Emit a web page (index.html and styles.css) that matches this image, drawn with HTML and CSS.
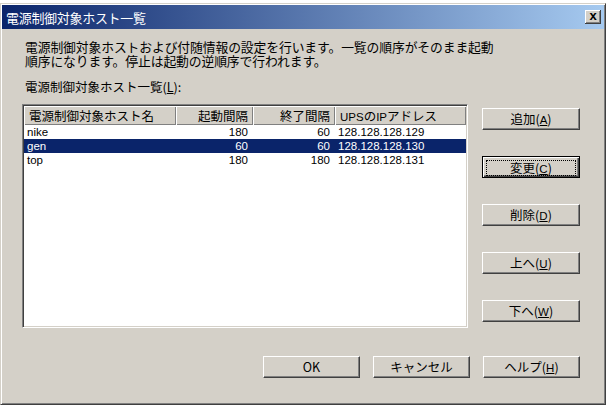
FILE: index.html
```html
<!DOCTYPE html>
<html lang="ja">
<head>
  <meta charset="UTF-8" />
  <title>電源制御対象ホスト一覧</title>
  <link rel="stylesheet" href="styles.css">
</head>
<body>
  <div class="window">
    <div class="titlebar">
      <span class="title">電源制御対象ホスト一覧</span>
      <span class="close">x</span>
    </div>

    <div class="content">
      <p class="desc">
        電源制御対象ホストおよび付随情報の設定を行います。一覧の順序がそのまま起動<br>
        順序になります。停止は起動の逆順序で行われます。
      </p>
      <p class="label">電源制御対象ホスト一覧(<u>L</u>):</p>

      <div class="main">
        <div class="listview">
          <table>
            <colgroup>
              <col class="c-name"><col class="c-start"><col class="c-stop"><col>
            </colgroup>
            <thead>
              <tr>
                <th>電源制御対象ホスト名</th>
                <th class="num">起動間隔</th>
                <th class="num">終了間隔</th>
                <th><span class="lat">UPS</span>の<span class="lat">IP</span>アドレス</th>
              </tr>
            </thead>
            <tbody>
              <tr>
                <td>nike</td><td class="num">180</td><td class="num">60</td><td>128.128.128.129</td>
              </tr>
              <tr class="selected">
                <td>gen</td><td class="num">60</td><td class="num">60</td><td>128.128.128.130</td>
              </tr>
              <tr>
                <td>top</td><td class="num">180</td><td class="num">180</td><td>128.128.128.131</td>
              </tr>
            </tbody>
          </table>
        </div>

        <div class="side">
          <button>追加(<u>A</u>)</button>
          <button class="default"><span class="focus">変更(<u>C</u>)</span></button>
          <button>削除(<u>D</u>)</button>
          <button>上へ(<u>U</u>)</button>
          <button>下へ(<u>W</u>)</button>
        </div>
      </div>

      <div class="footer">
        <button>OK</button>
        <button>キャンセル</button>
        <button>ヘルプ(<u>H</u>)</button>
      </div>
    </div>
  </div>
</body>
</html>
```

FILE: styles.css
```css
body {
  margin: 0;
  background: #ffffff;
  font-family: "Noto Sans CJK JP", sans-serif;
  font-size: 12.5px;
  color: #000;
}
.window {
  width: 606px;
  margin-top: 3px;
  background: #d4d0c8;
  border: 1px solid #d4d0c8;
  border-right-color: #404040;
  border-bottom-color: #404040;
  box-shadow: inset 1px 1px 0 #ffffff, inset -1px -1px 0 #808080;
  padding: 1px 1px 0 1px;
  box-sizing: border-box;
  height: 402px;
}
.titlebar {
  height: 24px;
  display: flex;
  align-items: center;
  justify-content: space-between;
  padding: 0 3px 0 4px;
  background: linear-gradient(to right, #0a246a, #a6caf0);
}
.title {
  color: #ffffff;
  font-size: 13px;
  letter-spacing: -0.3px;
}
.close {
  width: 16px;
  height: 14px;
  background: #d4d0c8;
  box-shadow: inset -1px -1px 0 #404040, inset 1px 1px 0 #ffffff, inset -2px -2px 0 #808080;
  font-family: "Liberation Sans", sans-serif;
  font-size: 13px;
  font-weight: bold;
  line-height: 12px;
  text-align: center;
}
.content {
  padding: 11px 24px 0 20px;
}
.desc {
  margin: 0 0 12px 3px;
  line-height: 14px;
  font-size: 12.8px;
  letter-spacing: -0.1px;
}
.label {
  margin: 0 0 10px 3px;
  line-height: 14px;
}
.main {
  display: flex;
  gap: 14px;
}
.listview {
  width: 447px;
  height: 224px;
  box-sizing: border-box;
  background: #ffffff;
  border: 1px solid #808080;
  border-right-color: #ffffff;
  border-bottom-color: #ffffff;
  box-shadow: inset 1px 1px 0 #404040, inset -1px -1px 0 #d4d0c8;
  padding: 1px;
}
table {
  width: 100%;
  border-collapse: collapse;
  table-layout: fixed;
}
.c-name { width: 152px; }
.c-start { width: 77px; }
.c-stop { width: 82px; }
th {
  height: 18px;
  padding: 0 5px;
  background: #d4d0c8;
  font-weight: normal;
  text-align: left;
  box-shadow: inset 1px 1px 0 #ffffff, inset -1px -1px 0 #808080;
  white-space: nowrap;
  overflow: hidden;
}
.lat {
  font-family: "Liberation Sans", sans-serif;
  font-size: 11.5px;
}
td {
  height: 14px;
  padding: 0 5px 0 3px;
  font-family: "Liberation Sans", sans-serif;
  font-size: 11.5px;
  line-height: 14px;
  white-space: nowrap;
}
.num {
  text-align: right;
}
tr.selected td {
  background: #0a246a;
  color: #ffffff;
}
.side {
  display: flex;
  flex-direction: column;
  gap: 26px;
  padding-top: 4px;
}
button {
  width: 98px;
  height: 22px;
  background: #d4d0c8;
  border: 1px solid #ffffff;
  border-right-color: #404040;
  border-bottom-color: #404040;
  box-shadow: inset -1px -1px 0 #808080;
  font-family: "Noto Sans CJK JP", sans-serif;
  font-size: 12.5px;
  padding: 0;
  color: #000;
  line-height: 18px;
}
button u {
  font-family: "Liberation Sans", sans-serif;
  font-size: 11.5px;
}
button.default {
  border: 1px solid #000000;
  box-shadow: inset 1px 1px 0 #ffffff, inset -1px -1px 0 #404040, inset -2px -2px 0 #808080;
  padding: 3px;
}
.focus {
  display: block;
  height: 14px;
  line-height: 13px;
  border: 1px dotted #000000;
}
.footer {
  display: flex;
  justify-content: flex-end;
  gap: 13px;
  margin-top: 28px;
}
.footer button {
  width: 97px;
}
```
